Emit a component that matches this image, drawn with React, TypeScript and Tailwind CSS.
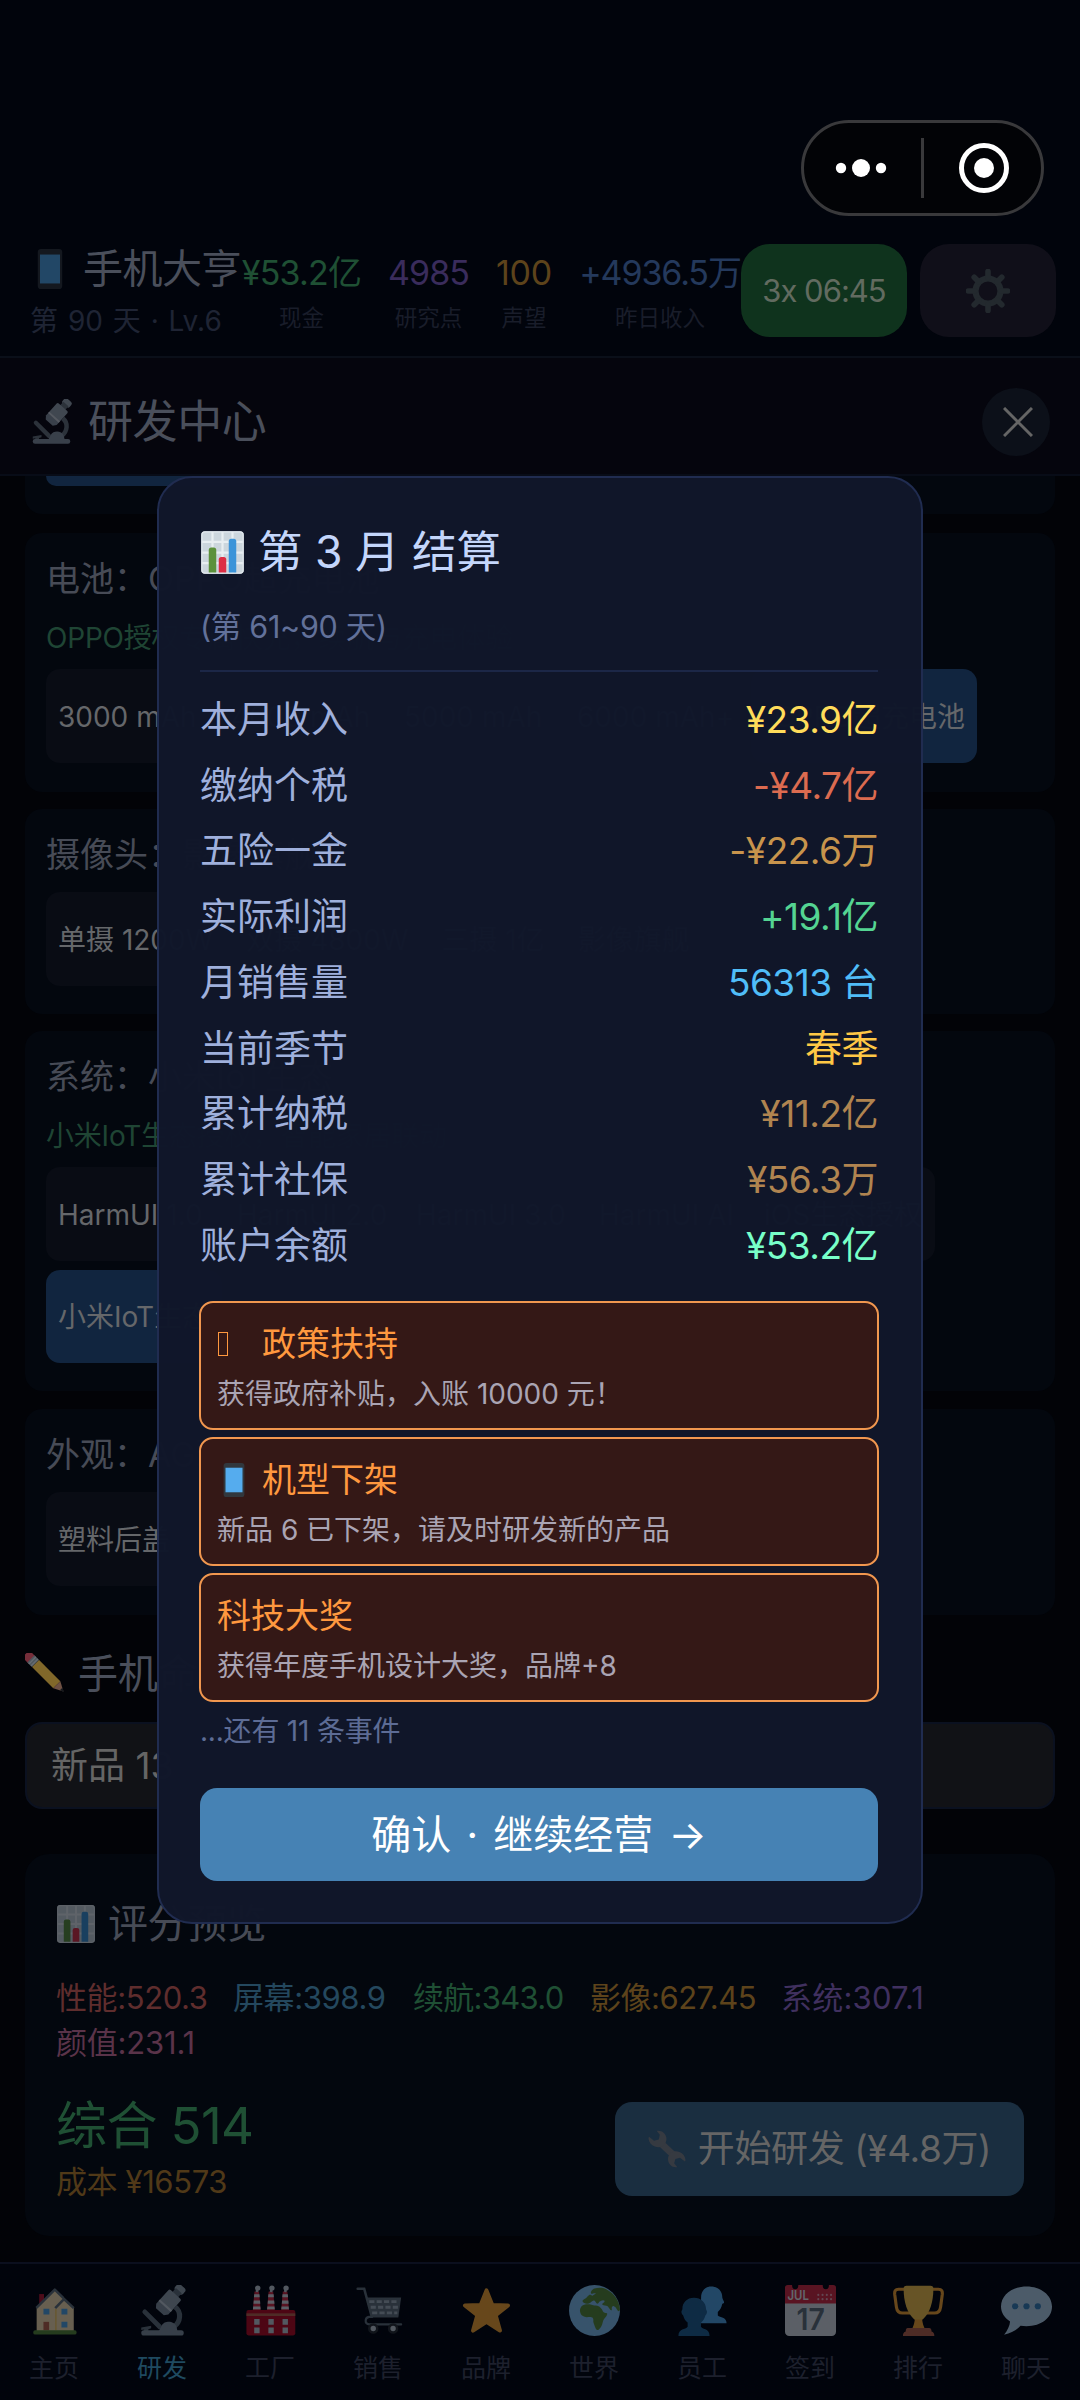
import React from 'react';
import clsx from 'clsx';

interface IconProps {
  className?: string;
}

interface Stat {
  value: string;
  label: string;
  box: string;
  color: string;
}

interface Chip {
  text: string;
  active?: boolean;
  width?: string;
}

interface ReportRow {
  label: string;
  value: string;
  color: string;
}

const Svg: React.FC<IconProps & { children: React.ReactNode }> = ({ className, children }) => (
  <svg viewBox="0 0 36 36" className={clsx('shrink-0', className)} aria-hidden="true">
    {children}
  </svg>
);

const PhoneIcon: React.FC<IconProps> = ({ className }) => (
  <Svg className={className}>
    <rect x="7" y="0" width="22" height="36" rx="3" fill="#31373D" />
    <rect x="9" y="5" width="18" height="26" fill="#55ACEE" />
  </Svg>
);

const ChartIcon: React.FC<IconProps> = ({ className }) => (
  <Svg className={className}>
    <rect x="1" y="1" width="34" height="34" rx="3" fill="#CCD6DD" />
    <path d="M1.5 9.5h33M1.5 18h33M1.5 26.5h33M10 1.5v33M18 1.5v33M26 1.5v33" stroke="#E8EEF1" strokeWidth="1.8" />
    <rect x="1.5" y="1.5" width="33" height="33" rx="2.5" fill="none" stroke="#E1E8ED" strokeWidth="1" />
    <path d="M7 34V16a2 2 0 0 1 2-2h2a2 2 0 0 1 2 2v18z" fill="#5C913B" />
    <path d="M15 34V23.500a2 2 0 0 1 2-2h2a2 2 0 0 1 2 2V34z" fill="#DD2E44" />
    <path d="M23 34V9a2 2 0 0 1 2-2h2a2 2 0 0 1 2 2v25z" fill="#3B94D9" />
  </Svg>
);

const MicroscopeIcon: React.FC<IconProps> = ({ className }) => (
  <Svg className={className}>
    <path d="M27 15.500C31.500 19 31 26 26 29.500" fill="none" stroke="#66757F" strokeWidth="3.600" />
    <path d="M5.500 19L16 29.500" stroke="#66757F" strokeWidth="3.400" strokeLinecap="round" />
    <path d="M3 30l7-1.200v1.700l-2 .7v2H5v-1.800l-2 .3z" fill="#66757F" />
    <path d="M15 33c1-1.500 1.700-2.500 2.300-4 1-2.400 3.200-3 5.200-3s4.500 1 5.300 3.500c.4 1.500.7 2 .7 3.500z" fill="#8899A6" />
    <rect x="3" y="32" width="30" height="3.700" rx="1.800" fill="#8899A6" />
    <g transform="rotate(42 22 12)">
      <rect x="18.500" y="-3" width="7.500" height="5.500" rx="2" fill="#99AAB5" />
      <rect x="19.500" y="1" width="5.500" height="5" fill="#66757F" />
      <rect x="16.500" y="4.500" width="11.500" height="12" rx="1.200" fill="#99AAB5" />
      <path d="M16.500 15.500H28v3l-2 2.500h-7.500l-2-2.500z" fill="#8899A6" />
      <rect x="16.500" y="14.500" width="11.500" height="1.500" fill="#CCD6DD" />
    </g>
  </Svg>
);

const GearIcon: React.FC<IconProps> = ({ className }) => (
  <Svg className={className}>
    <circle cx="18" cy="18" r="10.200" fill="none" stroke="currentColor" strokeWidth="5" />
    <path
      d="M18 2v5M18 29v5M2 18h5M29 18h5M6.700 6.700l3.500 3.500M25.800 25.800l3.500 3.500M29.300 6.700l-3.500 3.500M10.200 25.800l-3.500 3.500"
      stroke="currentColor"
      strokeWidth="4.600"
      strokeLinecap="round"
    />
  </Svg>
);

const PencilIcon: React.FC<IconProps> = ({ className }) => (
  <Svg className={className}>
    <g transform="rotate(45 18 18)">
      <path d="M-3.500 13.500H2v9h-5.500a3 3 0 0 1-3-3v-3a3 3 0 0 1 3-3z" fill="#EA596E" />
      <rect x="0" y="13.500" width="6" height="9" fill="#99AAB5" />
      <path d="M2 13.500v9M4.500 13.500v9" stroke="#CCD6DD" strokeWidth="1.200" />
      <rect x="6" y="13.500" width="27" height="9" fill="#FFCC4D" />
      <path d="M33 13.500l8.500 4.500-8.500 4.500z" fill="#D99E82" />
      <path d="M38.500 16.400l3.800 1.600-3.800 1.600z" fill="#292F33" />
    </g>
  </Svg>
);

const WrenchIcon: React.FC<IconProps> = ({ className }) => (
  <Svg className={className}>
    <path d="M10.500 11L26 25.500" stroke="currentColor" strokeWidth="6.500" />
    <path
      d="M8.200.8c4.300-.9 8.600 2 9.200 6.400.4 3-.5 5.600-2.700 7.500-2.300 1.800-5.300 2.200-8.200.9C3 14.200.9 11.600.5 8.200c0-.6.2-1.200.5-1.700l4.700 3.700 4.500-1.200 1-4.400z"
      fill="currentColor"
    />
    <path
      d="M27.800 35.200c-4.300.9-8-1.900-8.700-6.200-.5-3 .3-5.300 2.500-7.200 2.300-1.800 5.300-2.100 8.200-.9 3.400 1.400 5.300 3.900 5.700 7.300 0 .6-.2 1.200-.5 1.700l-4.700-3.700-4.300 1.200-1.200 4.100z"
      fill="currentColor"
    />
  </Svg>
);

const HouseIcon: React.FC<IconProps> = ({ className }) => (
  <Svg className={className}>
    <rect x="7.200" y="6.400" width="3.400" height="8" fill="#BE1931" />
    <path d="M5.400 16L18.200 3.600 31.600 16v16.500H5.400z" fill="#FFE8B6" />
    <path d="M19 17v15" stroke="#FFCC4D" strokeWidth=".8" />
    <path d="M5.200 16.200L18.200 3.200 24.500 9.500M18.500 16.300l6.200-6.400 6.900 6.400" fill="none" stroke="#66757F" strokeWidth="1.800" strokeLinejoin="round" />
    <path d="M10.200 16.800h4.200v4h-4.200zM22.900 16.800h4.200v4h-4.200zM22.900 26h4.200v4h-4.200z" fill="#55ACEE" />
    <rect x="10.200" y="26" width="4" height="6" fill="#C1694F" />
    <rect x="3" y="32" width="30.600" height="3" rx="1.300" fill="#5C913B" />
  </Svg>
);

const FactoryIcon: React.FC<IconProps> = ({ className }) => (
  <Svg className={className}>
    {[5.5, 15.5, 25.5].map((x) => (
      <g key={x} transform={`translate(${x} 0)`}>
        <path d="M1.200 4.500h3.200L5.600 18H0z" fill="#DD2E44" />
        <path d="M1 6.500h3.700l.2 2.200H.8zM.7 11h4.400l.2 2.200H.5zM.3 15.200h5l.2 2H.1z" fill="#E1E8ED" />
        <circle cx="3.500" cy="2.200" r="1.900" fill="#CCD6DD" />
        <circle cx="3" cy="4.200" r="1" fill="#CCD6DD" />
      </g>
    ))}
    <rect x="1" y="17.600" width="34.500" height="18" rx="1.500" fill="#BE0A20" />
    <rect x="1" y="20" width="34.500" height="1.900" fill="#C1694F" />
    <path
      d="M6.500 24h3.800v4H6.500zM16.500 24h3.800v4h-3.800zM26.500 24h3.800v4h-3.800zM6.500 30h3.800v4H6.500zM16.500 30h3.800v4h-3.800zM26.500 30h3.800v4h-3.800z"
      fill="#CCD6DD"
    />
  </Svg>
);

const CartIcon: React.FC<IconProps> = ({ className }) => (
  <Svg className={className}>
    <path d="M3.300 2.600h4.600L13 21.500" fill="none" stroke="#66757F" strokeWidth="1.800" strokeLinecap="round" />
    <path d="M10 8.800h24L32 23H13.300z" fill="#66757F" />
    <path d="M11.500 11.700h20.800M12.500 15.700h19.300M13.500 19.700h17.800" stroke="#AAB8C2" strokeWidth="2" strokeDasharray="3.600 1.600" />
    <path d="M13.500 22.500h-2.200c-3 .5-3.400 5 .2 5.300H34" fill="none" stroke="#66757F" strokeWidth="1.500" strokeLinecap="round" />
    <circle cx="14.300" cy="30.700" r="2.800" fill="#CCD6DD" stroke="#292F33" strokeWidth="1.800" />
    <circle cx="28.300" cy="30.700" r="2.800" fill="#CCD6DD" stroke="#292F33" strokeWidth="1.800" />
  </Svg>
);

const StarIcon: React.FC<IconProps> = ({ className }) => (
  <Svg className={className}>
    <path
      d="M18 3.800l4.100 10.300 11.100.4-8.700 6.900 3 10.800L18 26l-9.500 6.200 3-10.800-8.700-6.900 11.100-.4z"
      fill="#FFAC33"
      stroke="#FFAC33"
      strokeWidth="2.800"
      strokeLinejoin="round"
    />
  </Svg>
);

const GlobeIcon: React.FC<IconProps> = ({ className }) => (
  <Svg className={className}>
    <circle cx="18" cy="18" r="18" fill="#88C9F9" />
    <path
      d="M8 16.500c.5-1.500 2.200-2.800 4-2.900 2-.1 3.600-.1 4.500.5.6.5 2.300.2 3.500.6 2 .5 3.200 2.300 4 4 .6 1.200 3.200.8 3 1.800-.4 2-2.300 3-2.900 4.800-.5 1.700-.6 3.300-1.900 4.800-.7.900-1.500 2-2.500 1.600-1.200-.6-1.500-3-2.400-5-.4-1.200.3-2.400-.6-3.500-1-1.100-2.700-.5-4.200-.5-2 0-3.800-1-4.300-2.500-.4-1.200-.7-2.300-.2-3.700z"
      fill="#5C913B"
    />
    <path
      d="M9.500 11.500c0-1 1.500-1.500 2.600-2.300.9-.8 1.600-2 2.700-2.500l1.700.8 2.500-1.500c-1.500-.7-2.700.8-3.400 0-.6-.8.7-3 2.400-3.500 2.500-.8 5.700-.8 8.300.5C31.800 5.800 35.500 11 36 17.500c-.3 1-1 1.500-1.700.5-.9-1.500-1.600-2.700-2.900-3.100-1.200-.2-1.400 1.500-1.100 2.900-1 .6-2-1.600-3-2.800-1.200-.8-2.800-.2-3.900-1.300.4-1.200 2-1.200 1.700-2.500-1-1.100-2.500 0-3.500.5-.7.900-1 1.700-2 1.400-.7-.5-.9-1.700-1.900-2.100-1.400-.3-2 1.800-3.700 2-1.500.3-3.500.3-4.500-1.500z"
      fill="#5C913B"
    />
  </Svg>
);

const StaffIcon: React.FC<IconProps> = ({ className }) => (
  <Svg className={className}>
    <path
      d="M24 1c5 0 8 3 8 8 .1 1.200 1.600 2.800 1.200 3.600-.3.700-1.200.4-1.400 1.200-.3 2-1.300 3.800-3 5.200v2.500c1.500 1.600 6.200 1 6.200 5.500H17V9c0-5 3-8 7-8z"
      fill="#55ACEE"
    />
    <path
      d="M12 9c5 0 8.500 3.500 8.500 8 0 1 .9 1 .6 2.500-.3 1.400-1 1.500-1.200 2.300-.5 2-1.500 3.400-3 4.600v3c1.500 2.200 6.100 1 6.100 6.600H1c0-5.600 5-4.400 6.500-6.600v-3C6 25.200 5 23.800 4.500 21.800c-.2-.8-1-.9-1.300-2.300-.3-1.500.6-1.500.6-2.500C3.800 12.500 7 9 12 9z"
      fill="#226699"
    />
  </Svg>
);

const CalendarIcon: React.FC<IconProps> = ({ className }) => (
  <Svg className={className}>
    <path d="M0 12h36v21a3 3 0 0 1-3 3H3a3 3 0 0 1-3-3z" fill="#E1E8ED" />
    <path d="M2 0h3a2.200 3 0 0 0 4.400 0h17.200a2.200 3 0 0 0 4.400 0h3a2 2 0 0 1 2 2v11H0V2a2 2 0 0 1 2-2z" fill="#DD2E44" />
    <text x="1.800" y="10.800" fontSize="9" fontWeight="600" fill="#F5F8FA" textLength="15" lengthAdjust="spacingAndGlyphs">
      JUL
    </text>
    <path d="M23.500 7h11M23.500 10h11" stroke="#F4ABBA" strokeWidth="1.500" strokeLinecap="round" strokeDasharray="0 3" />
    <text x="8.200" y="32" fontSize="21.500" fontWeight="600" fill="#66757F" textLength="20" lengthAdjust="spacingAndGlyphs">
      17
    </text>
  </Svg>
);

const TrophyIcon: React.FC<IconProps> = ({ className }) => (
  <Svg className={className}>
    <path d="M9.500 3H4C1.500 3 1 4.500 1.200 6.500l1.200 9c.4 3 1.800 4.300 4.300 4.300H12" fill="none" stroke="#FFAC33" strokeWidth="2.200" />
    <path d="M26.500 3H32c2.500 0 3 1.500 2.800 3.500l-1.200 9c-.4 3-1.800 4.300-4.300 4.300H24" fill="none" stroke="#FFAC33" strokeWidth="2.200" />
    <path d="M15.500 22h5c0 4 .8 6 1.800 8.500h-8.600c1-2.500 1.800-4.500 1.800-8.500z" fill="#FFAC33" />
    <path d="M9.500.5h17c1.200 0 2 .8 2 2C28.500 12 26 20 21 24.300h-6C10 20 7.500 12 7.500 2.500c0-1.200.8-2 2-2z" fill="#FFCC4D" />
    <path d="M10.500 30.300h15c1.300 0 1.700 1 1.700 2.500 1.300.3 2 1.500 2 3.200H7c0-1.700.7-2.900 2-3.200 0-1.500.3-2.500 1.500-2.500z" fill="#C1694F" />
  </Svg>
);

const ChatIcon: React.FC<IconProps> = ({ className }) => (
  <Svg className={className}>
    <path
      d="M18 1C8 1 0 7 0 15.200c0 4.500 2.500 8 6.400 10.600-.2 3-1.800 6.200-4.200 9.400 5.300-1.200 9.300-3.700 11.600-6.400C27 30.500 36 24 36 15.200 36 7 28 1 18 1z"
      fill="#BDDDF4"
    />
    <circle cx="10" cy="15" r="2.200" fill="#3B88C3" />
    <circle cx="18" cy="15" r="2.200" fill="#3B88C3" />
    <circle cx="26" cy="15" r="2.200" fill="#3B88C3" />
  </Svg>
);

const stats: Stat[] = [
  { value: '¥53.2亿', label: '现金', box: 'w-[121px] tracking-[-0.800px]', color: 'text-[#1f5034]' },
  { value: '4985', label: '研究点', box: 'w-[81px] tracking-[-1px]', color: 'text-[#3a2c5c]' },
  { value: '100', label: '声望', box: 'w-[58px] tracking-[-0.200px]', color: 'text-[#5d431b]' },
  { value: '+4936.5万', label: '昨日收入', box: 'w-[162px] tracking-[-1.100px]', color: 'text-[#24395c]' },
];

const rows: ReportRow[] = [
  { label: '本月收入', value: '¥23.9亿', color: 'text-[#ffdc5a]' },
  { label: '缴纳个税', value: '-¥4.7亿', color: 'text-[#dc6b50]' },
  { label: '五险一金', value: '-¥22.6万', color: 'text-[#c8944c]' },
  { label: '实际利润', value: '+19.1亿', color: 'text-[#54d492]' },
  { label: '月销售量', value: '56313 台', color: 'text-[#50bdf8]' },
  { label: '当前季节', value: '春季', color: 'text-[#ffc845]' },
  { label: '累计纳税', value: '¥11.2亿', color: 'text-[#b08450]' },
  { label: '累计社保', value: '¥56.3万', color: 'text-[#b08450]' },
  { label: '账户余额', value: '¥53.2亿', color: 'text-[#78ffc8]' },
];

const scores = [
  { text: '性能:520.3', color: 'text-[#5f2d2d]', width: 'w-[177px] tracking-[-0.400px]' },
  { text: '屏幕:398.9', color: 'text-[#24485e]', width: 'w-[180px] tracking-[-0.400px]' },
  { text: '续航:343.0', color: 'text-[#1f5034]', width: 'w-[177px] tracking-[-0.700px]' },
  { text: '影像:627.45', color: 'text-[#5d431b]', width: 'w-[191px] tracking-[-0.500px]' },
  { text: '系统:307.1', color: 'text-[#40305f]', width: 'w-[177px] tracking-[0.200px]' },
  { text: '颜值:231.1', color: 'text-[#5a3349]', width: 'w-[177px] tracking-[-0.200px]' },
];

const tabs = [
  { label: '主页', Icon: HouseIcon },
  { label: '研发', Icon: MicroscopeIcon, active: true },
  { label: '工厂', Icon: FactoryIcon },
  { label: '销售', Icon: CartIcon },
  { label: '品牌', Icon: StarIcon },
  { label: '世界', Icon: GlobeIcon },
  { label: '员工', Icon: StaffIcon },
  { label: '签到', Icon: CalendarIcon },
  { label: '排行', Icon: TrophyIcon },
  { label: '聊天', Icon: ChatIcon },
];

const PartCard: React.FC<{ title: string; note?: string; chips: Chip[]; className?: string }> = ({ title, note, chips, className }) => (
  <section className={clsx('rounded-[17px] bg-[#03070e] px-[21px] pt-[21px]', className)}>
    <h3 className="h-[50px] whitespace-nowrap text-[34px] leading-[50px] text-[#474b56]">{title}</h3>
    {note && <p className="mt-[14px] h-[41px] whitespace-nowrap text-[28px] leading-[41px] tracking-[-0.200px] text-[#1f4534]">{note}</p>}
    <div className={clsx('flex flex-wrap gap-[9px]', note ? 'mt-[10px]' : 'mt-3')}>
      {chips.map((chip) => (
        <div
          key={chip.text}
          className={clsx(
            'flex h-[93.500px] items-center whitespace-nowrap rounded-[14px] px-3 pt-0.5 text-[28px] text-[#65676a]',
            chip.active ? 'bg-[#11253f]' : 'bg-[#090c14]',
            chip.width,
          )}
        >
          {chip.text}
        </div>
      ))}
    </div>
  </section>
);

const EventCard: React.FC<{ title: string; desc: string; icon?: React.ReactNode }> = ({ title, desc, icon }) => (
  <div className="h-[129px] rounded-[14px] border-2 border-[#f1974f] bg-[#341816] px-4 pt-4">
    <div className="flex h-[50px] items-center text-[34px] text-[#ff983f]">
      {icon && <span className="flex w-[45px] shrink-0 items-center">{icon}</span>}
      {title}
    </div>
    <p className="h-[50px] whitespace-nowrap text-[28px] leading-[50px] text-[#aaa4b3]">{desc}</p>
  </div>
);

const SettlementDialog: React.FC = () => (
  <div
    role="dialog"
    className="absolute left-[157px] top-[476px] h-[1448px] w-[766px] rounded-[35px] border-2 border-[#202c50] bg-[#10162a]/[0.985] pl-[41px] pr-[43px]"
  >
    <div className="mt-[44px] flex h-[60px] items-center text-[44.500px] text-[#c4d6fb]">
      <ChartIcon className="h-[45px] w-[45px]" />
      <h2 className="ml-[13px] whitespace-nowrap">第 3 月 结算</h2>
    </div>
    <p className="mt-[22px] h-[46px] text-[30.500px] leading-[46px] tracking-[-0.300px] text-[#62719a]">(第 61~90 天)</p>
    <div className="mt-5 h-0.5 bg-[#1c2747]" />
    <dl className="mt-[15px]">
      {rows.map((row) => (
        <div key={row.label} className="flex h-[65.700px] items-center justify-between text-[37px]">
          <dt className="text-[#9fb0dc]">{row.label}</dt>
          <dd className={clsx('tracking-[-0.500px]', row.color)}>{row.value}</dd>
        </div>
      ))}
    </dl>
    <div className="-mx-px mt-[22.500px] flex flex-col gap-[7px]">
      <EventCard
        title="政策扶持"
        desc="获得政府补贴，入账 10000 元！"
        icon={<span className="ml-px h-[24px] w-[10px] border border-[#ff983f]" />}
      />
      <EventCard title="机型下架" desc="新品 6 已下架，请及时研发新的产品" icon={<PhoneIcon className="h-[34px] w-[34px]" />} />
      <EventCard title="科技大奖" desc="获得年度手机设计大奖，品牌+8" />
    </div>
    <p className="mt-2 h-[42px] text-[28px] leading-[42px] tracking-[-0.200px] text-[#5d6c95]">...还有 11 条事件</p>
    <button className="mt-9 flex h-[93px] w-full items-center justify-center rounded-[17px] bg-[#4682b4] pt-px text-[40px] text-white [word-spacing:4px]">
      确认 · 继续经营 →
    </button>
  </div>
);

const App: React.FC = () => {
  return (
    <div className="relative flex h-[2400px] w-[1080px] flex-col overflow-hidden bg-[#020307] font-[Inter,'Noto_Sans_CJK_SC',sans-serif] font-normal">
      <header className="flex h-[358px] shrink-0 items-start border-b-2 border-[#0a0f19] bg-[#01040c] pl-[30px] pr-6 pt-[244px]">
        <div className="w-[211px] shrink-0 whitespace-nowrap">
          <div className="flex h-[50px] items-center text-[40px] text-[#4a4f5b]">
            <PhoneIcon className="h-10 w-10 opacity-40" />
            <span className="ml-[13px] tracking-[-0.500px]">手机大亨</span>
          </div>
          <p className="mt-[6px] h-[42px] text-[28px] leading-[42px] text-[#1f2434] [word-spacing:2px]">第 90 天 · Lv.6</p>
        </div>
        <div className="flex shrink-0 gap-[26px]">
          {stats.map((stat) => (
            <div key={stat.label} className="flex flex-col items-center whitespace-nowrap">
              <span className={clsx('h-[52px] pt-[3px] text-center text-[34px] leading-[52px]', stat.box, stat.color)}>{stat.value}</span>
              <span className="mt-[5px] text-[22.500px] leading-[34px] text-[#191d2a]">{stat.label}</span>
            </div>
          ))}
        </div>
        <button className="flex h-[93px] w-[166px] shrink-0 items-center justify-center whitespace-nowrap rounded-[29px] bg-[#0f331d] pt-px text-[31px] tracking-[-1px] text-[#626b60]">
          3x 06:45
        </button>
        <button className="ml-[13px] flex h-[93px] w-[136px] shrink-0 items-center justify-center rounded-[29px] bg-[#100f19] text-[#23292e]">
          <GearIcon className="h-[44px] w-[44px]" />
        </button>
      </header>

      <div className="flex h-[118px] shrink-0 items-center justify-between border-b-2 border-[#080c17] bg-[#05050d] pl-[29px] pr-[30px] pt-[11px]">
        <div className="flex items-center text-[45px] leading-[60px] text-[#4a4f5b]">
          <MicroscopeIcon className="h-[45px] w-[45px] opacity-40" />
          <h1 className="ml-[14px] tracking-[-0.400px]">研发中心</h1>
        </div>
        <button className="flex h-[68px] w-[68px] items-center justify-center rounded-full bg-[#0c1019]">
          <svg viewBox="0 0 30 30" className="ml-1 h-[30px] w-[30px]">
            <path d="M1 1l28 28M29 1L1 29" stroke="#656565" strokeWidth="3" />
          </svg>
        </button>
      </div>

      <main className="flex h-[1786px] shrink-0 flex-col overflow-hidden px-[25px]">
        <div className="h-[38px] shrink-0 rounded-b-[17px] bg-[#03070e] px-[21px]">
          <div className="h-[10px] w-[300px] rounded-b-[14px] bg-[#11253f]" />
        </div>
        <PartCard
          className="mt-[19px] h-[259px] shrink-0"
          title="电池：OPPO超充电池"
          note="OPPO授权专属快充，续航与充电体验"
          chips={[
            { text: '3000 mAh', width: 'w-[164px]' },
            { text: '4000 mAh', width: 'w-[164px]' },
            { text: '5000 mAh', width: 'w-[164px]' },
            { text: '6000 mAh+', width: 'w-[177px]' },
            { text: 'OPPO超充电池', active: true, width: 'w-[226px] justify-end' },
          ]}
        />
        <PartCard
          className="mt-[17px] h-[205px] shrink-0"
          title="摄像头：影像旗舰"
          chips={[{ text: '单摄 1200W' }, { text: '双摄 4800W' }, { text: '三摄 1亿' }, { text: '影像旗舰' }]}
        />
        <PartCard
          className="mt-[17px] h-[360px] shrink-0"
          title="系统：小米IoT生态"
          note="小米IoT生态授权，智能家居联动"
          chips={[
            { text: 'HarmUI 1.0', width: 'w-[170px]' },
            { text: 'HarmUI 2.0', width: 'w-[170px]' },
            { text: 'HarmUI 3.0', width: 'w-[174px]' },
            { text: 'HarmUI AI', width: 'w-[156px]' },
            { text: 'iOS生态授权', width: 'w-[183px]' },
            { text: '小米IoT生态', active: true },
          ]}
        />
        <PartCard className="mt-[18px] h-[206px] shrink-0" title="外观：AG玻璃" chips={[{ text: '塑料后盖' }]} />

        <div className="mt-[28px] flex h-[60px] shrink-0 items-center text-[40px] text-[#4a4f5b]">
          <PencilIcon className="h-10 w-10 opacity-50" />
          <h2 className="ml-[13px] pt-px">手机命名</h2>
        </div>
        <div className="mt-[19px] flex h-[87px] shrink-0 items-center rounded-[17px] border-2 border-[#0b1120] bg-[#111216] pl-6 text-[37px] text-[#656565]">
          新品 13
        </div>

        <section className="mt-[45px] flex h-[382px] shrink-0 flex-col rounded-[24px] bg-[#03070e] px-[31px] pt-[42px]">
          <div className="flex h-[56px] items-center text-[40px] text-[#474b56]">
            <ChartIcon className="h-10 w-10 opacity-40" />
            <h2 className="ml-3 tracking-[-0.400px]">评分预览</h2>
          </div>
          <div className="mt-[23px] flex flex-wrap text-[31px] leading-[45px]">
            {scores.map((score) => (
              <span key={score.text} className={clsx('whitespace-nowrap', score.color, score.width)}>
                {score.text}
              </span>
            ))}
          </div>
          <div className="mt-[27px] flex items-center justify-between">
            <div>
              <p className="h-[67px] text-[51px] leading-[67px] tracking-[-0.600px] text-[#1f5034]">综合 514</p>
              <p className="h-[46px] text-[31px] leading-[46px] tracking-[-0.400px] text-[#503918]">成本 ¥16573</p>
            </div>
            <button className="flex h-[94px] w-[409px] items-center justify-center whitespace-nowrap rounded-[17px] bg-[#1a2e40] text-[37px] tracking-[-0.400px] text-[#656565]">
              <WrenchIcon className="mr-3 h-[38px] w-[38px] text-[#363a41]" />
              开始研发 (¥4.8万)
            </button>
          </div>
        </section>
      </main>

      <nav className="flex h-[138px] shrink-0 border-t-2 border-[#0b0f1e] bg-[#01040c] pt-[21px]">
        {tabs.map(({ label, Icon, active }) => (
          <div key={label} className="flex w-[108px] flex-col items-center">
            <Icon className="h-[51px] w-[51px] opacity-40" />
            <span className={clsx('mt-[13px] text-[25px] leading-[38px]', active ? 'text-[#1f4a60]' : 'text-[#1d202d]')}>{label}</span>
          </div>
        ))}
      </nav>

      {/* host app capsule, floats above everything */}
      <div className="absolute left-[801px] top-[120px] flex h-[96px] w-[243px] items-center rounded-full border-[3px] border-[#39393b] bg-[#020306]">
        <svg viewBox="0 0 237 90" className="h-[90px] w-[237px]">
          <circle cx="37" cy="45" r="5.200" fill="#fff" />
          <circle cx="57" cy="45" r="9" fill="#fff" />
          <circle cx="77" cy="45" r="5.200" fill="#fff" />
          <rect x="117" y="15" width="3" height="60" fill="#39393b" />
          <circle cx="180" cy="45" r="22.500" fill="none" stroke="#fff" strokeWidth="5" />
          <circle cx="180" cy="45" r="10" fill="#fff" />
        </svg>
      </div>

      <SettlementDialog />
    </div>
  );
};

export default App;
